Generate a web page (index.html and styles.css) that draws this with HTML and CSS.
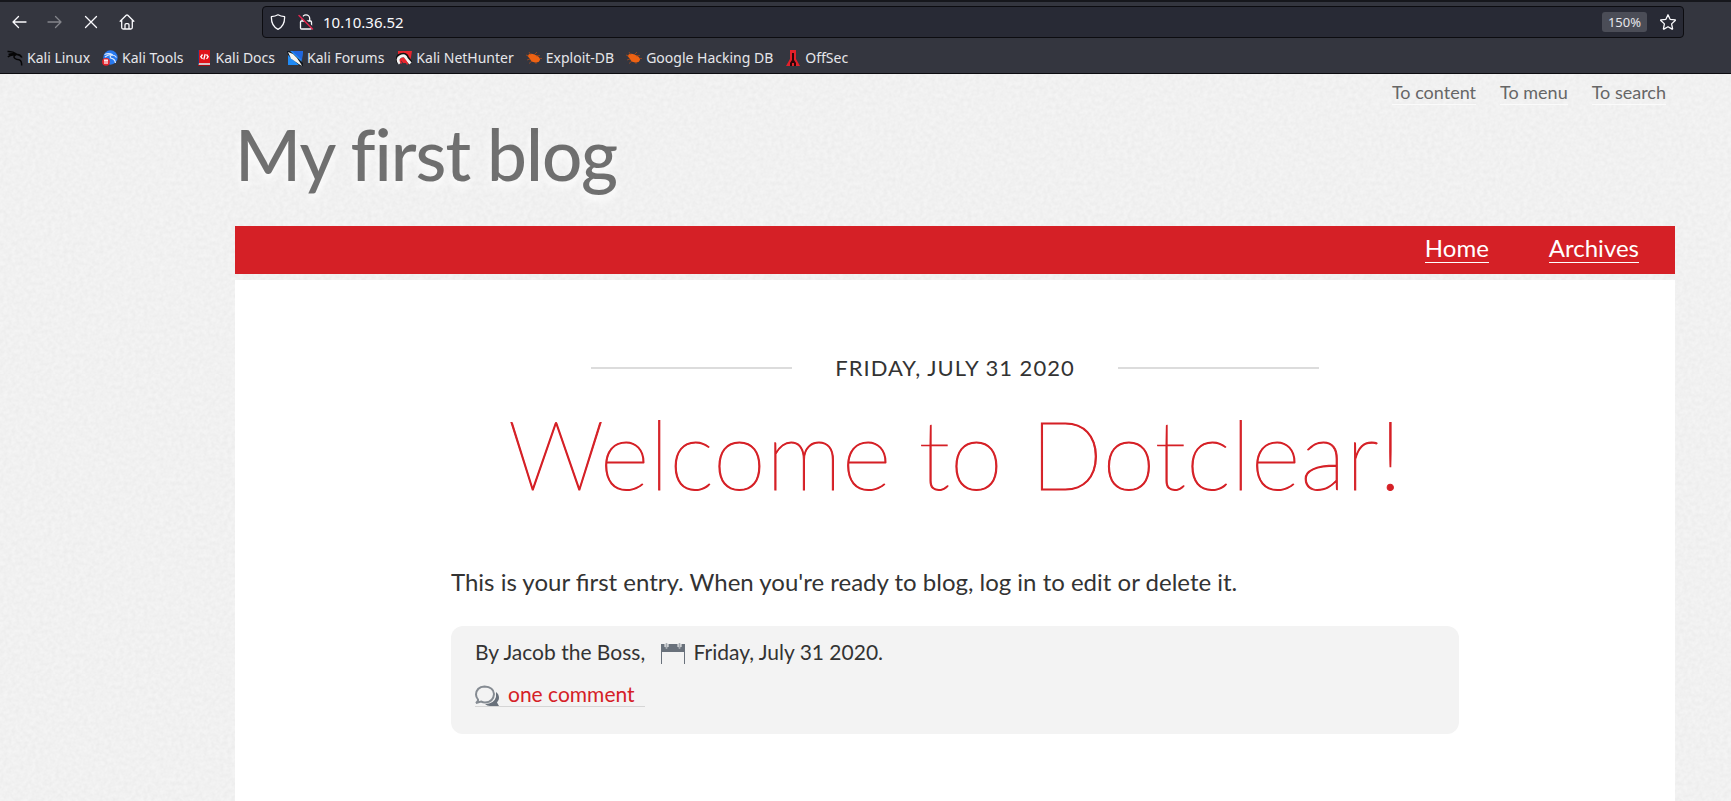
FILE: index.html
```html
<!DOCTYPE html>
<html lang="en">
<head>
<meta charset="utf-8">
<title>My first blog</title>
<link rel="stylesheet" href="styles.css">
</head>
<body>
<div class="browser">
  <div class="toolbar">
    <div class="nav-buttons">
      <button type="button" aria-label="Back"><svg width="16" height="16" viewBox="0 0 16 16"><path d="M15 8H2M7.500 2.500L2 8l5.500 5.500"/></svg></button>
      <button type="button" class="dim" aria-label="Forward"><svg width="16" height="16" viewBox="0 0 16 16"><path d="M1 8h13M8.500 2.500L14 8l-5.500 5.500"/></svg></button>
      <button type="button" aria-label="Stop"><svg width="16" height="16" viewBox="0 0 16 16"><path d="M2.500 2.500l11 11M13.500 2.500l-11 11"/></svg></button>
      <button type="button" aria-label="Home"><svg width="16" height="16" viewBox="0 0 16 16"><path d="M1.200 7.300L7.200 1.300Q8 .6 8.800 1.300l6 6M2.700 6v7.500q0 1.500 1.500 1.500h7.600q1.500 0 1.500-1.500V6M6 15v-4.200q0-1.200 1.200-1.200h1.600q1.200 0 1.200 1.200V15"/></svg></button>
    </div>
    <div class="urlbar">
      <svg class="glyph" width="16" height="16" viewBox="0 0 16 16"><path d="M8 .8c2 1.200 4 1.700 6.600 1.900C14.800 8.500 12.800 13 8 15.300 3.200 13 1.200 8.500 1.400 2.700 4 2.500 6 2 8 .8z"/></svg>
      <svg class="glyph" width="16" height="16" viewBox="0 0 16 16"><path d="M4.300 7V4.500a3.700 3.700 0 0 1 7.400 0V7M3.500 7h9q1 0 1 1v6q0 1-1 1h-9q-1 0-1-1V8q0-1 1-1z"/><path class="slash-gap" d="M2 1l13.500 13.500"/><path class="slash" d="M1 1.500l13.500 13.500"/></svg>
      <input class="address" type="text" value="10.10.36.52" aria-label="Address">
      <button type="button" class="zoom">150%</button>
      <button type="button" aria-label="Bookmark this page"><svg width="18" height="18" viewBox="0 0 18 18"><path d="M9 1.800l2.100 4.500 5 .6q.5.200.1.600l-3.600 3.400 1 4.900q0 .5-.5.300L9 13.700l-4.100 2.400q-.5.200-.5-.3l1-4.900L1.800 7.500q-.4-.4.100-.6l5-.6z"/></svg></button>
    </div>
  </div>
  <nav class="bookmarks" aria-label="Bookmarks">
    <a href="#"><svg width="16" height="16" viewBox="0 0 16 16"><path fill="none" stroke="#050506" stroke-width="1.500" d="M.5 1.500Q6 1.200 9.500 4M1.500 4.500Q5 3 10 4.500q3 .5 4.500 2.500M.8 7Q4 4.500 7.500 5.200M9 4.500q-3.500 2-1 4 1.500 1.200 4 1.300 2.800.6 2.700 5.700M10 4.500q3-.5 5 3"/></svg>Kali Linux</a>
    <a href="#"><svg width="16" height="16" viewBox="0 0 16 16"><circle cx="8.500" cy="7.500" r="7.200" fill="#2879ef"/><path fill="none" stroke="#d8e9ff" stroke-width="1.200" d="M2.500 4.500Q7 2.500 11 5M3 7q4-3 7-2-3 1.500-1 3.200Q13 9 13.500 13M10 5q3 0 4.500 2.500"/><circle cx="4" cy="11.800" r="3.900" fill="#e5232b"/><path stroke="#fff" stroke-width="1.200" d="M2 10.200h4M3 10v4M5 10v4"/></svg>Kali Tools</a>
    <a href="#"><svg width="16" height="16" viewBox="0 0 16 16"><path fill="#e01319" d="M3 0h11v13H3z"/><path fill="#233f77" d="M2 0h1v14H2z"/><path fill="#d8c3c6" d="M3 13h11v2H2.500z"/><path fill="#a10c12" d="M2 15h12v1H2z"/><path fill="none" stroke="#fff" stroke-width="1.300" d="M6.500 4.500L4.800 6.800l1.700 2M10.500 4.500L12.200 6.800l-1.700 2M9.200 4L7.800 9.500"/></svg>Kali Docs</a>
    <a href="#"><svg width="16" height="16" viewBox="0 0 16 16"><path fill="#218bf5" d="M1 1h15l-2 14H1z"/><path fill="#2066de" d="M5 1h11l-1 9z"/><path fill="#11161d" d="M0 1h3l13 12v3h-3L1 5z"/><path fill="#f4f4ef" d="M1 2l5 2 4 4 4 6 1 2-4-2.500L4 8.500z"/></svg>Kali Forums</a>
    <a href="#"><svg width="16" height="16" viewBox="0 0 16 16"><path fill="#e9252e" d="M2 1h14l-2 12H7L2 6z"/><path fill="none" stroke="#111" stroke-width="4.500" d="M3 12Q0 7 5 5.500T11 8l4 5.500"/><path fill="none" stroke="#f4f4f4" stroke-width="3" d="M4 13.500Q0 9 4.500 6.500T10.500 9l4 4.500"/><path fill="none" stroke="#e9252e" stroke-width="1.500" d="M5.500 13.500Q3 10 6 9t5.500 5.500"/></svg>Kali NetHunter</a>
    <a href="#"><svg width="16" height="16" viewBox="0 0 16 16"><path fill="#ed6213" d="M1.500 6Q3 3 7 4l3.500 1.500q4 2 3.500 4.500-1 3-5 2.500Q5 12 4 9z"/><path fill="none" stroke="#b94c14" stroke-width=".7" d="M5 5L3 2M8 5l3-3M10 6l4-.5M4 9l-3 1M6 11l-3 2.500M10 12v2M13 8.500h3M0 5l3 1"/></svg>Exploit-DB</a>
    <a href="#"><svg width="16" height="16" viewBox="0 0 16 16"><path fill="#ed6213" d="M1.500 6Q3 3 7 4l3.500 1.500q4 2 3.500 4.500-1 3-5 2.500Q5 12 4 9z"/><path fill="none" stroke="#b94c14" stroke-width=".7" d="M5 5L3 2M8 5l3-3M10 6l4-.5M4 9l-3 1M6 11l-3 2.500M10 12v2M13 8.500h3M0 5l3 1"/></svg>Google Hacking DB</a>
    <a href="#"><svg width="16" height="16" viewBox="0 0 16 16"><path fill="#e3202a" d="M5 0h6v9l4 7H1l4-7z"/><path fill="#2b0609" d="M7 3h2v7l2 3v3H9v-3H7v3H5v-3l2-3z"/></svg>OffSec</a>
  </nav>
</div>
<div class="page">
  <div class="wrap">
    <header class="masthead">
      <ul class="prelude">
        <li><a href="#main">To content</a></li>
        <li><a href="#menu">To menu</a></li>
        <li><a href="#search">To search</a></li>
      </ul>
      <h1>My first blog</h1>
    </header>
    <nav class="menu" id="menu">
      <a href="#">Home</a>
      <a href="#">Archives</a>
    </nav>
    <main class="content" id="main">
      <article>
        <p class="day">Friday, July 31 2020</p>
        <h2>Welcome to Dotclear!</h2>
        <p class="entry">This is your first entry. When you're ready to blog, log in to edit or delete it.</p>
        <footer class="meta">
          <p>By Jacob the Boss,
            <span class="date"><svg width="24" height="21" viewBox="0 0 24 21"><path fill="#69717b" d="M0 1h24v8H0zM0 9h1v12H0zM23 9h1v12h-1z"/><path fill="none" stroke="#f3f3f3" stroke-width="4" d="M5.500 0v4M18.500 0v4"/><path fill="none" stroke="#a6abb1" stroke-width="2" stroke-linecap="round" d="M5.500 1v4M18.500 1v4"/></svg>Friday, July 31 2020.</span></p>
          <p><a class="comments" href="#"><svg width="24" height="21" viewBox="0 0 24 21"><path fill="#69717b" d="M21 7q3 2 3 6 0 2.500-2 4.500l2 3.500h-9q-3 0-5-2 9 0 11-7z"/><path fill="#f3f3f3" stroke="#858b92" stroke-width="2" d="M3 14.500Q1 12 1 9.500 1.500 2 9.500 1.500q9 .5 9.500 7.500-.5 8-9 8.500-2 0-4-1L1 18q2.500-2 2-3.500z"/></svg>one comment</a></p>
        </footer>
      </article>
    </main>
  </div>
</div>
</body>
</html>
```
FILE: styles.css
```css
* { box-sizing: border-box; }
html, body { height: 100%; }
body {
  margin: 0;
  display: flex;
  flex-direction: column;
  font-family: Lato, sans-serif;
  color: #333;
}
p, h1, h2, ul { margin: 0; padding: 0; }
button { border: 0; padding: 0; background: none; color: inherit; font: inherit; display: flex; }
svg { flex: none; }

.browser {
  background: #34363f;
  border-top: 2px solid #16171c;
  border-bottom: 1px solid #0c0c10;
  color: #e6e6ea;
  font: 15px/20px "Noto Sans", sans-serif;
}
.toolbar { display: flex; align-items: center; padding: 4px 47px 0 11px; }
.nav-buttons { display: flex; gap: 20px; width: 251px; }
.toolbar svg { fill: none; stroke: #fbfbfe; stroke-width: 1.3; stroke-linecap: round; stroke-linejoin: round; }
.dim { opacity: .4; }
.urlbar {
  flex: 1;
  display: flex;
  align-items: center;
  gap: 12px;
  height: 32px;
  padding: 0 6px 0 7px;
  background: #282a35;
  border: 1px solid #0c0c10;
  border-radius: 4px;
}
.toolbar .slash-gap { stroke: #282a35; stroke-width: 2; }
.toolbar .slash { stroke: #e22850; stroke-width: 1.5; }
.address {
  flex: 1;
  min-width: 0;
  margin-left: -3px;
  padding: 0;
  border: 0;
  background: none;
  color: #fbfbfe;
  font: inherit;
}
.zoom { padding: 0 6px; border-radius: 3px; background: #4b4d57; font-size: 13px; }
.bookmarks { display: flex; gap: 12px; padding: 10px 7px 5px; font-size: 14px; }
.bookmarks a { display: flex; align-items: center; gap: 4px; color: inherit; text-decoration: none; }

.page {
  flex: 1;
  display: flex;
  background: #f4f4f4 url("data:image/svg+xml,%3Csvg xmlns='http://www.w3.org/2000/svg' width='300' height='300'%3E%3Cfilter id='n'%3E%3CfeTurbulence type='fractalNoise' baseFrequency='.25' numOctaves='3' stitchTiles='stitch'/%3E%3CfeColorMatrix values='0 0 0 0 0 0 0 0 0 0 0 0 0 0 0 .05 0 0 0 -.012'/%3E%3C/filter%3E%3Crect width='300' height='300' filter='url(%23n)'/%3E%3C/svg%3E");
}
.wrap { flex: 1; display: flex; flex-direction: column; padding: 0 56px 0 235px; }
.masthead { padding-bottom: 29px; }
.prelude { display: flex; justify-content: flex-end; gap: 24px; padding: 6px 9px 0; list-style: none; font-size: 18px; line-height: 24px; }
.prelude a { display: block; color: #666; border-bottom: 1px solid #fbfbfb; text-decoration: none; }
.masthead h1 {
  padding-top: 5px;
  font-size: 71px;
  line-height: 87px;
  font-weight: 500;
  letter-spacing: -1px;
  color: rgba(0, 0, 0, .55);
  text-shadow: 0 6px 8px #fff;
}
.menu {
  display: flex;
  justify-content: flex-end;
  gap: 60px;
  padding: 8px 36px 11px;
  background: #d52026;
  font-size: 24px;
  line-height: 28px;
}
.menu a { color: #fff; border-bottom: 1px solid #fff; text-decoration: none; }
.content { flex: 1; margin-top: 6px; padding: 73px 15%; background: #fff; }
.day {
  display: flex;
  align-items: center;
  justify-content: center;
  gap: 43px;
  font-size: 22px;
  line-height: 30px;
  letter-spacing: 1px;
  text-transform: uppercase;
}
.day::before, .day::after { content: ""; width: 20%; height: 2px; background: #dcdcdc; }
.content h2 {
  margin: 10px 0 51px;
  color: #d52026;
  font-size: 96px;
  line-height: 120px;
  font-weight: 200;
  -webkit-text-stroke: 1px #d52026;
  text-align: center;
  white-space: nowrap;
}
.entry { font-size: 24px; line-height: 36px; }
.meta { margin-top: 26px; padding: 5px 24px 19px; border-radius: 12px; background: #f3f3f3; font-size: 21px; line-height: 42px; }
.meta svg { vertical-align: -4px; margin-right: 9px; }
.date { margin-left: 10px; }
.comments { padding-right: 10px; border-bottom: 1px solid #d5d5d5; color: #d52026; text-decoration: none; }
```
